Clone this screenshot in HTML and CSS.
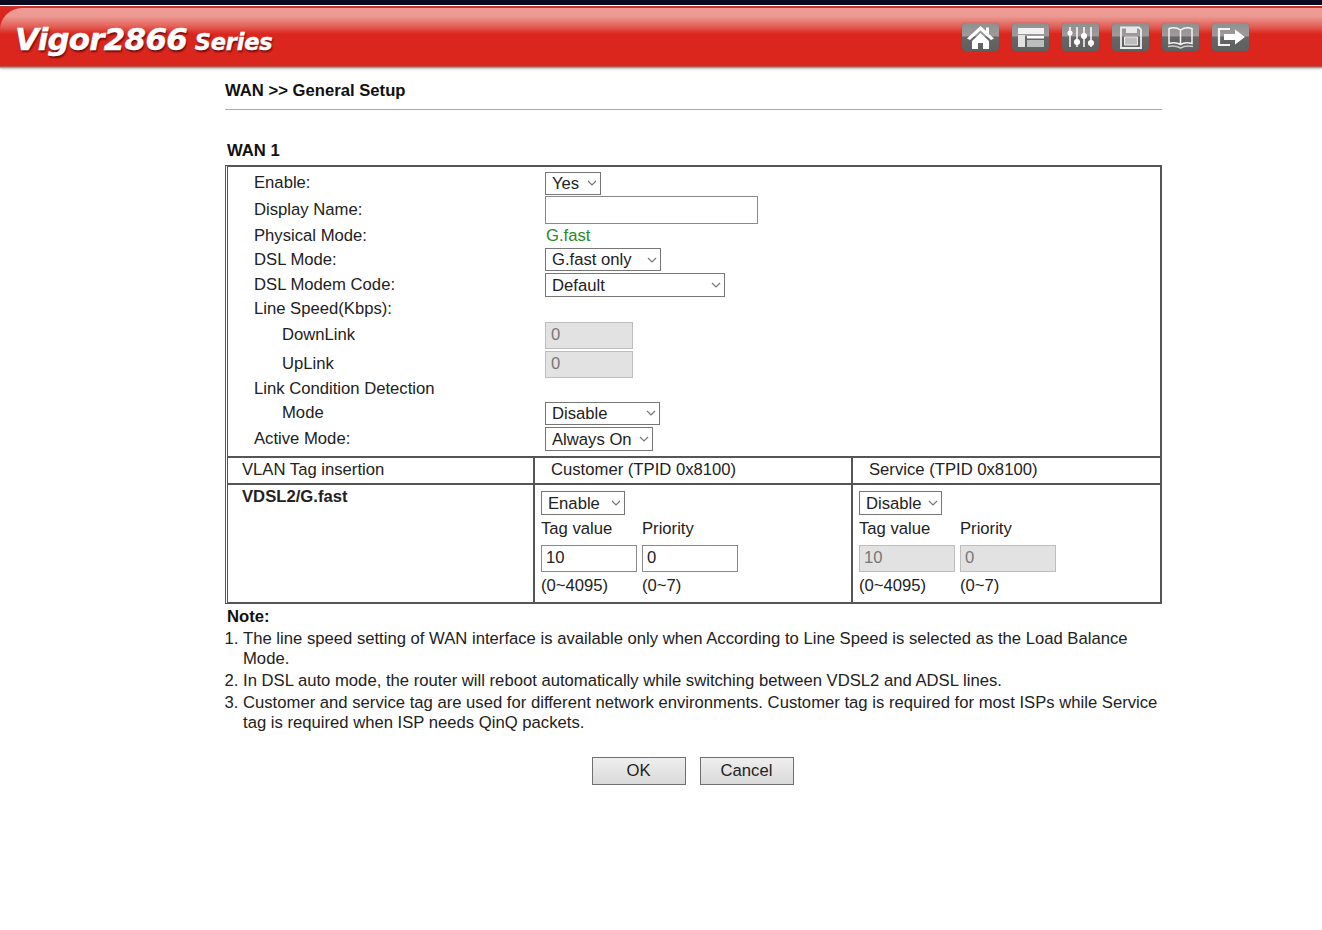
FILE: index.html
```html
<!DOCTYPE html>
<html lang="en">
<head>
  <meta charset="UTF-8" />
  <title>WAN General Setup</title>
  <link rel="stylesheet" href="styles.css">
</head>
<body>
  <header class="topbar">
    <div class="logo"><span class="logo-name">Vigor2866</span> <span class="logo-series">Series</span></div>
    <nav class="tools">
      <span class="tool"><svg viewBox="0 0 37 28"><path d="M18.500 3 L5 15.500 L8 17 L18.500 7.500 L29 17 L32 15.500 L27 11 V4.500 H24 V8Z" fill="#fff"/><path d="M10 18 L18.500 10 L27 18 V26 H21 V20 H16 V26 H10Z" fill="#fff"/></svg></span>
      <span class="tool"><svg viewBox="0 0 37 28"><path d="M6 5 H32 V11 H6Z" fill="#f0f0f0"/><path d="M6 12 H13 V24 H6Z" fill="#e2e2e2"/><path d="M15 13 H32 V15.500 H15Z" fill="#fff"/><path d="M15 17 H32 V24 H15Z" fill="#bdbdbd"/></svg></span>
      <span class="tool"><svg viewBox="0 0 37 28" stroke="#fff" stroke-width="1.500" fill="#fff"><path d="M8 4 V24 M15 4 V24 M22 4 V24 M29 4 V24"/><circle cx="8" cy="10" r="1.800"/><circle cx="15" cy="19" r="2.300"/><circle cx="22" cy="13" r="2.300"/><circle cx="29" cy="20" r="2.300"/></svg></span>
      <span class="tool"><svg viewBox="0 0 37 28"><path d="M9 4.500 H27 L29 6.500 V25 H9Z" fill="none" stroke="#eee" stroke-width="1.800"/><path d="M14 4 H25 V10 H14Z" fill="#e8e8e8"/><path d="M12.500 14 H25.500 V22 H12.500Z" fill="#bdbdbd" stroke="#eee" stroke-width="1"/></svg></span>
      <span class="tool"><svg viewBox="0 0 37 28" fill="none" stroke="#f4f4f4" stroke-width="1.500"><path d="M18.500 7 C15 4.500 10 4.500 7 5.500 V20.500 C11 19.500 15 19.500 18.500 21.500 C22 19.500 26 19.500 30 20.500 V5.500 C27 4.500 22 4.500 18.500 7Z M18.500 7 V21.500"/><path d="M6 23.500 C11 22.500 15 23 18.500 25 C22 23 26 22.500 31 23.500" stroke="#ccc"/></svg></span>
      <span class="tool"><svg viewBox="0 0 37 28"><path d="M18 6 H7 V22 H18" fill="none" stroke="#f4f4f4" stroke-width="2.200"/><path d="M12 11 H23 V6.500 L33 14 L23 21.500 V17 H12Z" fill="#fff"/></svg></span>
    </nav>
  </header>

  <main class="content">
    <h1 class="page-title">WAN &gt;&gt; General Setup</h1>
    <h2 class="section-title">WAN 1</h2>

    <div class="panel">
      <div class="form-rows">
        <div class="form-row row-enable"><span>Enable:</span><select class="sel w-yes"><option>Yes</option></select></div>
        <div class="form-row row-name"><span>Display Name:</span><input class="txt w-name" type="text"></div>
        <div class="form-row row-phys"><span>Physical Mode:</span><span class="green">G.fast</span></div>
        <div class="form-row row-dsl"><span>DSL Mode:</span><select class="sel w-dsl"><option>G.fast only</option></select></div>
        <div class="form-row row-code"><span>DSL Modem Code:</span><select class="sel w-code"><option>Default</option></select></div>
        <div class="form-row row-speed"><span>Line Speed(Kbps):</span></div>
        <div class="form-row row-down indent"><span>DownLink</span><input class="txt off w-speed" type="text" value="0" disabled></div>
        <div class="form-row row-up indent"><span>UpLink</span><input class="txt off w-speed" type="text" value="0" disabled></div>
        <div class="form-row row-detect"><span>Link Condition Detection</span></div>
        <div class="form-row row-mode indent"><span>Mode</span><select class="sel w-mode"><option>Disable</option></select></div>
        <div class="form-row row-active"><span>Active Mode:</span><select class="sel w-active"><option>Always On</option></select></div>
      </div>

      <div class="vlan-head">
        <div class="cell first">VLAN Tag insertion</div>
        <div class="cell customer">Customer (TPID 0x8100)</div>
        <div class="cell service">Service (TPID 0x8100)</div>
      </div>

      <div class="vlan-body">
        <div class="cell first"><strong>VDSL2/G.fast</strong></div>
        <div class="cell tag-cell">
          <select class="sel w-enable"><option>Enable</option></select>
          <div class="tag-grid">
            <span>Tag value</span><span>Priority</span>
            <input class="txt tag" type="text" value="10"><input class="txt tag" type="text" value="0">
            <span>(0~4095)</span><span>(0~7)</span>
          </div>
        </div>
        <div class="cell tag-cell">
          <select class="sel w-disable"><option>Disable</option></select>
          <div class="tag-grid">
            <span>Tag value</span><span>Priority</span>
            <input class="txt tag off" type="text" value="10" disabled><input class="txt tag off" type="text" value="0" disabled>
            <span>(0~4095)</span><span>(0~7)</span>
          </div>
        </div>
      </div>
    </div>

    <div class="notes">
      <strong class="note-title">Note:</strong>
      <ol class="note-list">
        <li>The line speed setting of WAN interface is available only when According to Line Speed is selected as the Load Balance Mode.</li>
        <li>In DSL auto mode, the router will reboot automatically while switching between VDSL2 and ADSL lines.</li>
        <li>Customer and service tag are used for different network environments. Customer tag is required for most ISPs while Service tag is required when ISP needs QinQ packets.</li>
      </ol>
    </div>

    <div class="actions">
      <button class="btn">OK</button>
      <button class="btn">Cancel</button>
    </div>
  </main>
</body>
</html>
```

FILE: styles.css
```css
body {
  margin: 0;
  background: #fff;
  color: #222;
  font-family: "Liberation Sans", Arial, sans-serif;
  font-size: 16.67px;
}
.topbar {
  position: relative;
  height: 68px;
  display: flex;
  justify-content: space-between;
  background: linear-gradient(#0c0a20 0, #0c0a20 5px, #fff 5px, #fff 6px, #c8322c 6px, #c8322c 8px, #da261d 9px, #da261d 64px, #b5352e 66px, #d0a8a5 68px);
  box-shadow: 0 1px 2px #bbb;
}
.topbar::before {
  content: "";
  position: absolute;
  top: 8px;
  left: 0;
  right: 0;
  height: 26px;
  border-top-left-radius: 22px;
  background: linear-gradient(#f19a95 0, #ec9a95 8px, #e4625a 18px, #da261d 26px);
}
.logo {
  position: relative;
  padding: 21px 0 0 15px;
  color: #fff;
  font-family: "DejaVu Sans", sans-serif;
  font-weight: bold;
  font-style: italic;
  -webkit-text-stroke: .4px #fff;
  text-shadow: 1px 2px 2px rgba(60, 0, 0, .7);
  white-space: nowrap;
}
.logo-name { font-size: 31px; letter-spacing: -.8px; }
.logo-series { font-size: 22.500px; margin-left: 2px; letter-spacing: -.2px; }
.tools {
  position: relative;
  display: flex;
  gap: 13px;
  padding: 23px 73px 0 0;
}
.tool {
  width: 37px;
  height: 28px;
  border-radius: 4px;
  background: linear-gradient(#8f8f8f 0, #a09a9a 46%, #666 50%, #5f5f5f 100%);
  box-shadow: 0 0 1px #555;
}
.tool svg { display: block; width: 37px; height: 28px; filter: blur(.3px); }

.content {
  width: 937px;
  margin-left: 225px;
}
.page-title {
  margin: 0;
  padding: 14px 0 9px;
  height: 18px;
  font-size: 16.67px;
  line-height: 18px;
  font-weight: bold;
  color: #111;
  border-bottom: 1px solid #aaa;
}
.section-title {
  margin: 32px 0 5px 2px;
  font-size: 16.67px;
  line-height: 18px;
  color: #111;
}
.panel {
  border: 2px solid #555;
  border-left: 3px double #555;
}
.form-rows { padding-bottom: 4px; }
.form-row {
  display: grid;
  grid-template-columns: 291px 1fr;
  padding-left: 26px;
  align-items: center;
}
.form-row.indent { grid-template-columns: 263px 1fr; padding-left: 54px; }
.row-enable { height: 24px; padding: 4px 0 1px 26px; }
.row-name { height: 28px; }
.row-phys { height: 23px; }
.row-dsl { height: 25px; }
.row-code { height: 26px; }
.row-speed { height: 22px; }
.row-down { height: 30px; }
.row-up { height: 28px; }
.row-detect { height: 22px; }
.row-mode { height: 26px; }
.row-active { height: 26px; }
.green { color: #2a8a1e; padding-left: 1px; }

.sel {
  appearance: none;
  height: 23px;
  padding: 0 0 0 6px;
  border: 1px solid #767676;
  border-radius: 0;
  background: #fff url("data:image/svg+xml,%3Csvg xmlns='http://www.w3.org/2000/svg' width='10' height='6'%3E%3Cpath d='M1 1 L5 5 L9 1' fill='none' stroke='%23777' stroke-width='1.200'/%3E%3C/svg%3E") no-repeat right 3px center;
  color: #222;
  font: 16.67px "Liberation Sans", Arial, sans-serif;
}
.w-yes { width: 56px; }
.w-dsl { width: 116px; }
.w-code { width: 180px; height: 24px; }
.w-mode { width: 115px; }
.w-active { width: 108px; height: 24px; }
.w-enable { width: 84px; height: 24px; }
.w-disable { width: 83px; height: 24px; }
.txt {
  box-sizing: border-box;
  height: 28px;
  padding: 0 4px;
  border: 1px solid #8a8a8a;
  border-radius: 0;
  color: #222;
  font: 16.67px "Liberation Sans", Arial, sans-serif;
}
.w-name { width: 213px; }
.w-speed { width: 88px; height: 27px; padding-left: 5px; }
.off {
  background: #e2e2e2;
  border-color: #bdbdbd;
  color: #777;
}

.vlan-head, .vlan-body {
  display: grid;
  grid-template-columns: 305px 318px 1fr;
  border-top: 2px solid #555;
}
.vlan-head { height: 25px; }
.vlan-body { height: 117px; }
.cell { border-left: 2px solid #555; }
.cell.first { border-left: 0; padding-left: 14px; }
.vlan-head .cell { line-height: 24px; }
.customer { padding-left: 16px; }
.service { padding-left: 16px; }
.vlan-body .first { padding-top: 3px; line-height: 18px; }
.tag-cell { padding: 6px 0 0 6px; }
.tag-grid {
  display: grid;
  grid-template-columns: 96px 96px;
  grid-template-rows: 24px 34px 22px;
  column-gap: 5px;
  align-items: center;
  margin-top: 2px;
}
.tag { width: 96px; height: 27px; }

.notes { padding: 2px 0 0 2px; line-height: 21px; }
.note-title { color: #111; }
.note-list {
  margin: 0;
  padding: 2px 0 0 16px;
}
.note-list li { line-height: 20px; margin-bottom: 2px; }

.actions {
  display: flex;
  justify-content: center;
  gap: 14px;
  margin-top: 24px;
  padding-right: 2px;
}
.btn {
  width: 94px;
  height: 28px;
  border: 1px solid #707070;
  background: linear-gradient(#efefef, #d9d9d9);
  color: #222;
  font: 16.67px "Liberation Sans", Arial, sans-serif;
}
```
